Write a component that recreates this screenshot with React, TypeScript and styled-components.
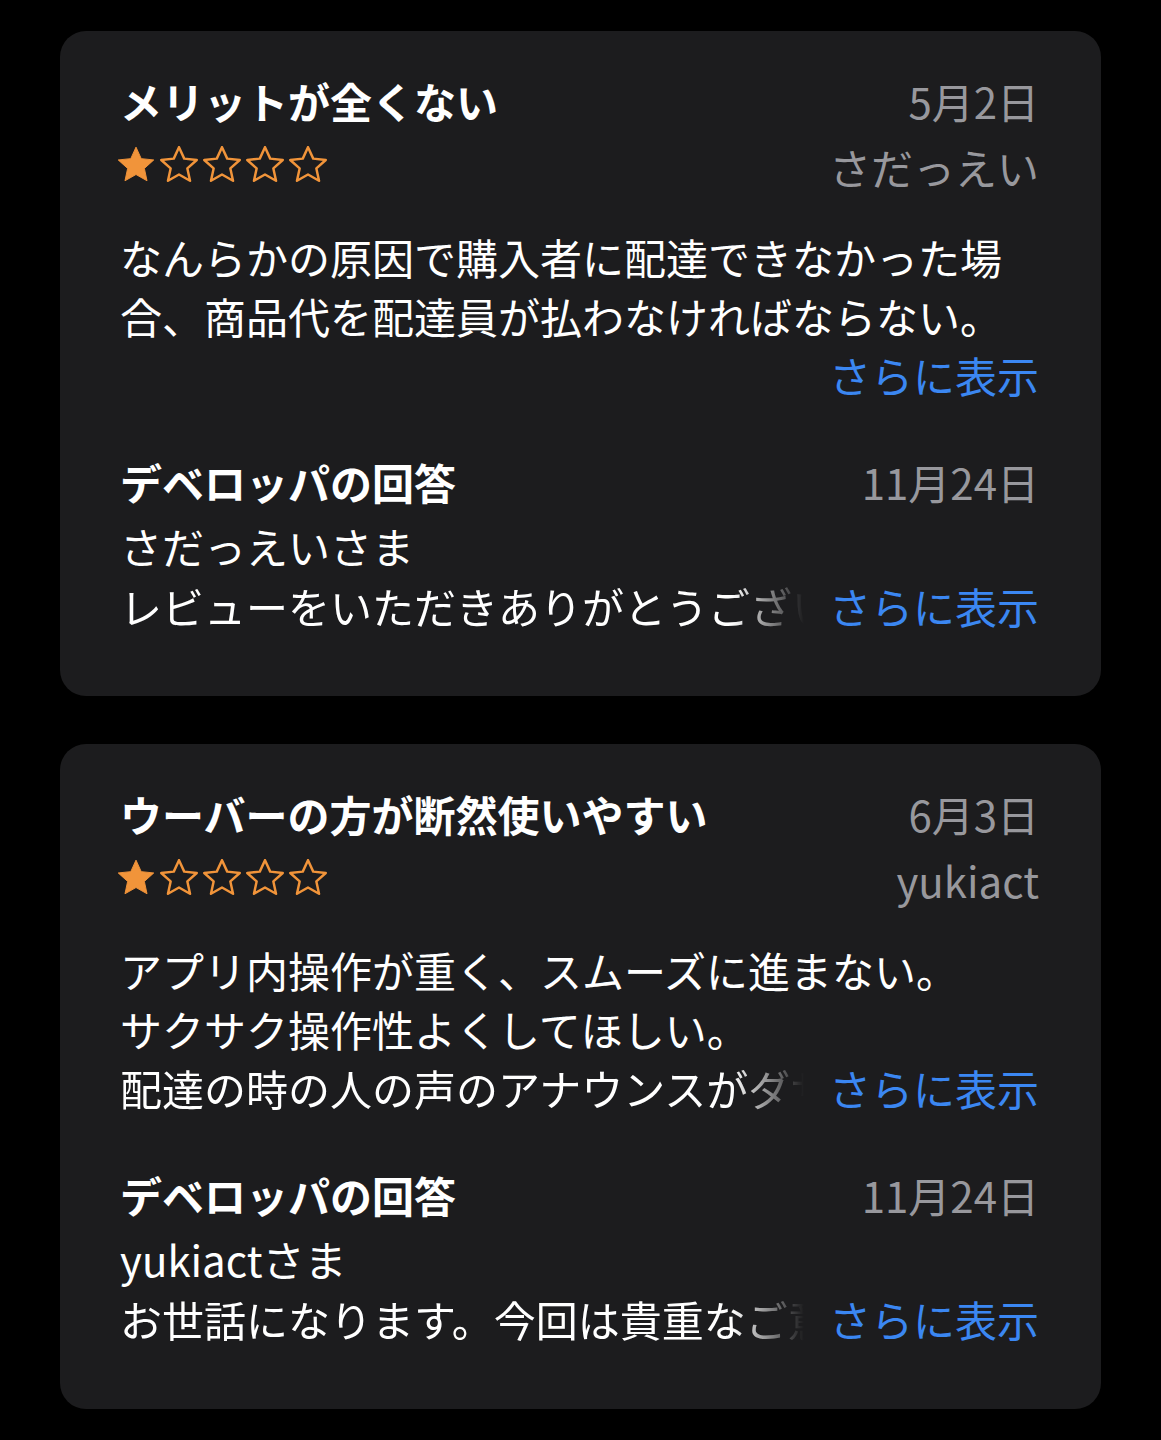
import React from "react";
import styled, { createGlobalStyle } from "styled-components";

const Global = createGlobalStyle`
  html, body { margin: 0; padding: 0; background: #000; }
  body { font-family: "Noto Sans CJK JP", "Noto Sans", sans-serif; -webkit-font-smoothing: antialiased; }
`;

const Page = styled.div`
  background: #000;
  padding: 31px 60px 30px 60px;
  display: flex;
  flex-direction: column;
  gap: 48px;
`;

const Card = styled.section`
  background: #1c1c1e;
  border-radius: 26px;
  padding: 40px 62px 60px 60px;
  color: #fff;
  font-size: 42px;
`;

const Header = styled.div`
  display: grid;
  grid-template-columns: 1fr auto;
  grid-template-rows: 60px 68px;
`;

const Title = styled.div`
  font-weight: 700;
  line-height: 60px;
  white-space: nowrap;
`;

const Meta = styled.div<{ $offset?: number }>`
  color: #98989d;
  line-height: 60px;
  text-align: right;
  white-space: nowrap;
  padding-top: ${(p) => p.$offset ?? 0}px;
`;

const Stars = styled.div`
  display: flex;
  align-items: center;
  gap: 5px;
  margin-left: -3px;
`;

const Body = styled.div`
  margin-top: 28px;
  line-height: 59px;
`;

const Line = styled.div`
  white-space: nowrap;
`;

const MoreRow = styled.div`
  display: flex;
  justify-content: flex-end;
`;

const TruncRow = styled.div`
  display: flex;
  align-items: baseline;
`;

const Faded = styled.span`
  flex: 1;
  min-width: 0;
  overflow: hidden;
  white-space: nowrap;
  -webkit-mask-image: linear-gradient(to right, #000 calc(100% - 72px), transparent 100%);
  mask-image: linear-gradient(to right, #000 calc(100% - 72px), transparent 100%);
`;

const More = styled.span`
  color: #3b87f2;
  white-space: nowrap;
  margin-left: 25px;
`;

const Response = styled.div`
  margin-top: 48px;
`;

const ResponseHeader = styled.div`
  display: flex;
  justify-content: space-between;
  line-height: 60px;
`;

const ResponseBody = styled.div`
  margin-top: 4px;
  line-height: 60px;
`;

const StarIcon = ({ filled }: { filled: boolean }) => (
  <svg width="38" height="38" viewBox="2 2 20 20">
    <path
      d="M12 2.6l2.75 6.05 6.6.7-4.95 4.45 1.4 6.5L12 17l-5.8 3.3 1.4-6.5-4.95-4.45 6.6-.7z"
      fill={filled ? "#f1943a" : "none"}
      stroke="#f1943a"
      strokeWidth={filled ? 0.5 : 1.3}
      strokeLinejoin="round"
    />
  </svg>
);

type Review = {
  title: string;
  date: string;
  author: string;
  rating: number;
  lines: string[];
  truncated?: string;
  reply: { date: string; first: string; second: string };
};

const reviews: Review[] = [
  {
    title: "メリットが全くない",
    date: "5月2日",
    author: "さだっえい",
    rating: 1,
    lines: [
      "なんらかの原因で購入者に配達できなかった場",
      "合、商品代を配達員が払わなければならない。",
    ],
    reply: {
      date: "11月24日",
      first: "さだっえいさま",
      second: "レビューをいただきありがとうございます。",
    },
  },
  {
    title: "ウーバーの方が断然使いやすい",
    date: "6月3日",
    author: "yukiact",
    rating: 1,
    lines: ["アプリ内操作が重く、スムーズに進まない。", "サクサク操作性よくしてほしい。"],
    truncated: "配達の時の人の声のアナウンスがダサい。",
    reply: {
      date: "11月24日",
      first: "yukiactさま",
      second: "お世話になります。今回は貴重なご意見をいただき",
    },
  },
];

const ReviewCard = ({ r }: { r: Review }) => (
  <Card>
    <Header>
      <Title>{r.title}</Title>
      <Meta>{r.date}</Meta>
      <Stars>
        {[0, 1, 2, 3, 4].map((i) => (
          <StarIcon key={i} filled={i < r.rating} />
        ))}
      </Stars>
      <Meta $offset={6}>{r.author}</Meta>
    </Header>
    <Body>
      {r.lines.map((l) => (
        <Line key={l}>{l}</Line>
      ))}
      {r.truncated ? (
        <TruncRow>
          <Faded>{r.truncated}</Faded>
          <More>さらに表示</More>
        </TruncRow>
      ) : (
        <MoreRow>
          <More>さらに表示</More>
        </MoreRow>
      )}
    </Body>
    <Response>
      <ResponseHeader>
        <Title>デベロッパの回答</Title>
        <Meta>{r.reply.date}</Meta>
      </ResponseHeader>
      <ResponseBody>
        <Line>{r.reply.first}</Line>
        <TruncRow>
          <Faded>{r.reply.second}</Faded>
          <More>さらに表示</More>
        </TruncRow>
      </ResponseBody>
    </Response>
  </Card>
);

export default function App() {
  return (
    <>
      <Global />
      <Page>
        {reviews.map((r) => (
          <ReviewCard key={r.title} r={r} />
        ))}
      </Page>
    </>
  );
}
